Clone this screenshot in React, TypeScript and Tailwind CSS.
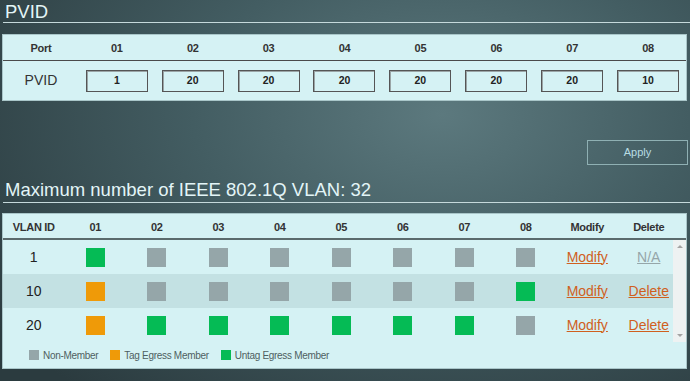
const ports = ["01", "02", "03", "04", "05", "06", "07", "08"];
const pvids = ["1", "20", "20", "20", "20", "20", "20", "10"];

type Member = "n" | "t" | "u";

const vlans: { id: string; ports: Member[]; canDelete: boolean }[] = [
  { id: "1", ports: ["u", "n", "n", "n", "n", "n", "n", "n"], canDelete: false },
  { id: "10", ports: ["t", "n", "n", "n", "n", "n", "n", "u"], canDelete: true },
  { id: "20", ports: ["t", "u", "u", "u", "u", "u", "u", "n"], canDelete: true },
];

const swatch: Record<Member, string> = {
  n: "bg-[#95a6a9]",
  t: "bg-[#ef9a08]",
  u: "bg-[#05bb55]",
};

const vlanCols = "grid grid-cols-[repeat(11,61.5px)]";

function Square({ m }: { m: Member }) {
  return (
    <div className="flex justify-center">
      <div className={`w-[19px] h-[19px] ${swatch[m]}`} />
    </div>
  );
}

export default function App() {
  return (
    <div className="w-[690px] h-[381px] overflow-hidden bg-[radial-gradient(ellipse_80%_95%_at_64%_30%,#5c797e_0%,#435d62_45%,#2b3b3f_100%)] font-['Liberation_Sans',Arial,sans-serif]">
      {/* PVID */}
      <h2 className="ml-[3px] pl-[2px] pt-[1px] leading-[21px] text-[18.5px] text-[#e3f5f7] border-b border-[#c5d9db]">
        PVID
      </h2>
      <div className="ml-[2px] w-[685px] mt-[11px] border border-[#a9c6c9] bg-[#d5f2f4]">
        <div className="grid grid-cols-9 h-[26px] pt-[2px] items-center border-b border-[#4a4a4a] text-[11px] tracking-[-0.3px] font-bold text-[#333]">
          <div className="text-center">Port</div>
          {ports.map((p) => (
            <div key={p} className="text-center">
              {p}
            </div>
          ))}
        </div>
        <div className="grid grid-cols-9 h-[39px] items-center">
          <div className="text-center text-[14px] text-[#333]">PVID</div>
          {pvids.map((v, i) => (
            <div key={i} className="flex justify-center">
              <div className="w-[62px] h-[22px] flex items-center justify-center border border-[#555] shadow-[inset_1px_1px_0_#9aa5a6] text-[10.5px] font-bold text-[#222]">
                {v}
              </div>
            </div>
          ))}
        </div>
      </div>

      <div className="flex justify-end mt-[39px] mr-[2px]">
        <button className="w-[101px] h-[25px] border border-[#8fb0b3] text-[11px] text-[#b8dde4]">
          Apply
        </button>
      </div>

      {/* VLAN table */}
      <h2 className="ml-[3px] pl-[2px] mt-[14px] pb-[2px] leading-[21px] text-[18.5px] text-[#e3f5f7] border-b border-[#c5d9db]">
        Maximum number of IEEE 802.1Q VLAN: 32
      </h2>
      <div className="ml-[2px] w-[685px] mt-[10px] border border-[#a9c6c9] bg-[#d5f2f4]">
        <div className={`${vlanCols} h-[26px] pt-[3px] items-center border-b-2 border-[#5a6a6c] text-[11px] tracking-[-0.3px] font-bold text-[#333]`}>
          <div className="text-center">VLAN ID</div>
          {ports.map((p) => (
            <div key={p} className="text-center">
              {p}
            </div>
          ))}
          <div className="text-center">Modify</div>
          <div className="text-center">Delete</div>
        </div>
        <div className="flex">
          <div className="w-[670px] overflow-hidden">
            {vlans.map((v, r) => (
              <div
                key={v.id}
                className={`${vlanCols} h-[34px] items-center ${r === 1 ? "bg-[#c3e1e3]" : ""}`}
              >
                <div className="text-center text-[14px] text-[#222]">{v.id}</div>
                {v.ports.map((m, i) => (
                  <Square key={i} m={m} />
                ))}
                <div className="text-center text-[14px] text-[#d0601e] underline">Modify</div>
                {v.canDelete ? (
                  <div className="text-center text-[14px] text-[#d0601e] underline">Delete</div>
                ) : (
                  <div className="text-center text-[14px] text-[#95a6a9] underline">N/A</div>
                )}
              </div>
            ))}
          </div>
          <div className="w-[13px] h-[102px] bg-[#eef2f2] flex flex-col items-center justify-between py-[5px]">
            <div className="w-0 h-0 border-l-[3px] border-r-[3px] border-b-[3px] border-l-transparent border-r-transparent border-b-[#a3a3a3]" />
            <div className="w-0 h-0 border-l-[3px] border-r-[3px] border-t-[3px] border-l-transparent border-r-transparent border-t-[#a3a3a3]" />
          </div>
        </div>
        <div className="h-[26px] flex items-center pl-[26px] text-[10px] tracking-[-0.3px] text-[#4f5f61]">
          <div className="w-[10px] h-[10px] bg-[#95a6a9]" />
          <span className="ml-[4px]">Non-Member</span>
          <div className="ml-[12px] w-[10px] h-[10px] bg-[#ef9a08]" />
          <span className="ml-[4px]">Tag Egress Member</span>
          <div className="ml-[12px] w-[10px] h-[10px] bg-[#05bb55]" />
          <span className="ml-[4px]">Untag Egress Member</span>
        </div>
      </div>
    </div>
  );
}
